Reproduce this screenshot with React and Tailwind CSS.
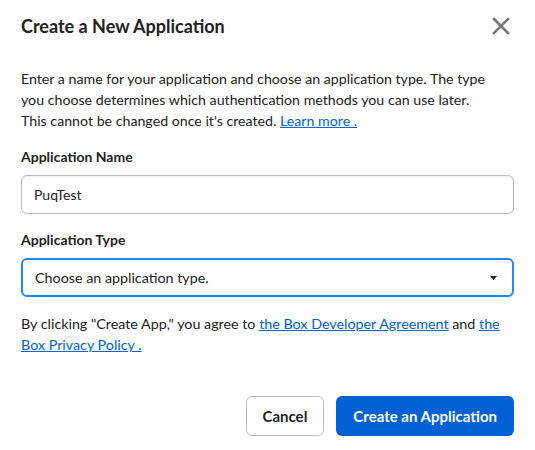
import React, { useState } from 'react';

export default function App() {
  const [name, setName] = useState('PuqTest');

  return (
    <div className="w-[535px] h-[450px] bg-white text-[#222222] font-['Lato',sans-serif]">
      <div className="px-[21px] pt-[14px]">
        <div className="flex items-center justify-between h-[24px]">
          <h2 className="text-[18px] font-bold leading-[24px]">Create a New Application</h2>
          <button className="mr-[3px] text-[#767676]">
            <svg width="20" height="20" viewBox="0 0 20 20">
              <path d="M3 3 L17 17 M17 3 L3 17" stroke="currentColor" strokeWidth="2.6" strokeLinecap="square" />
            </svg>
          </button>
        </div>

        <p className="mt-[30px] max-w-[473px] text-[14.2px] leading-[21px]">
          Enter a name for your application and choose an application type. The type you choose determines which authentication methods you can use later. This cannot be changed once it's created.{' '}
          <a href="#" className="text-[#0061d5] underline">Learn more .</a>
        </p>

        <label className="block mt-[16px] text-[14px] font-bold leading-[20px]">Application Name</label>
        <input
          className="mt-[8px] w-full h-[39px] border border-[#bcbcbc] rounded-[6px] px-[12px] text-[14px] outline-none shadow-[inset_0_1px_2px_rgba(0,0,0,0.08)]"
          value={name}
          onChange={e => setName(e.target.value)}
        />

        <label className="block mt-[16px] text-[14px] font-bold leading-[20px]">Application Type</label>
        <div className="mt-[8px] w-full h-[39px] border-2 border-[#2486fc] rounded-[6px] pl-[12px] pr-[15px] flex items-center justify-between text-[14.3px]">
          <span>Choose an application type.</span>
          <svg width="7" height="4" viewBox="0 0 7 4">
            <path d="M0 0 L7 0 L3.5 4 Z" fill="#222" />
          </svg>
        </div>

        <p className="mt-[16px] text-[14.3px] leading-[21px]">
          By clicking "Create App," you agree to{' '}
          <a href="#" className="text-[#0061d5] underline">the Box Developer Agreement</a> and{' '}
          <a href="#" className="text-[#0061d5] underline">the Box Privacy Policy .</a>
        </p>

        <div className="mt-[41px] flex justify-end gap-[12px]">
          <button className="h-[40px] px-[16px] border border-[#bcbcbc] rounded-[6px] text-[15px] font-bold bg-white">Cancel</button>
          <button className="h-[40px] px-[17px] rounded-[6px] text-[15px] font-bold bg-[#0061d5] text-white">Create an Application</button>
        </div>
      </div>
    </div>
  );
}
